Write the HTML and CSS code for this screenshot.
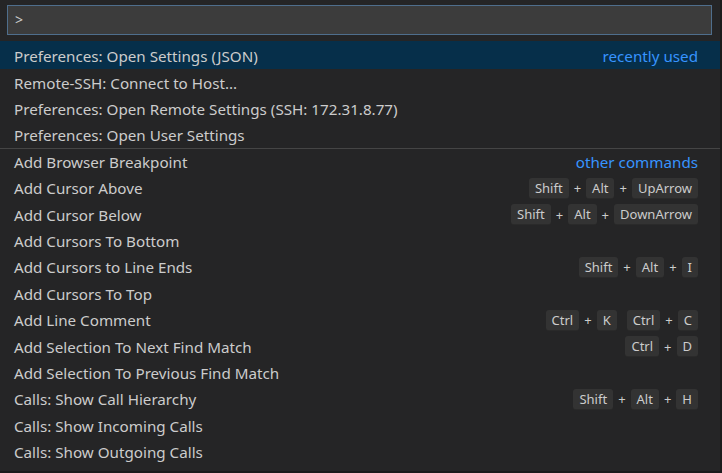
FILE: index.html
```html
<!DOCTYPE html>
<html>
	<head>
		<meta charset="utf-8" />
		<title>Command Palette</title>
		<link rel="stylesheet" href="styles.css">
	</head>
	<body>
		<div id="palette">
			<div class="input_wrap">
				<div class="input">&gt;</div>
			</div>
			<ul class="list">
				<li class="active"><span class="label">Preferences: Open Settings (JSON)</span><span class="group">recently used</span></li>
				<li><span class="label">Remote-SSH: Connect to Host...</span></li>
				<li><span class="label">Preferences: Open Remote Settings (SSH: 172.31.8.77)</span></li>
				<li><span class="label">Preferences: Open User Settings</span></li>
				<li class="sep"><span class="label">Add Browser Breakpoint</span><span class="group">other commands</span></li>
				<li><span class="label">Add Cursor Above</span>
					<span class="keys"><kbd>Shift</kbd><i>+</i><kbd>Alt</kbd><i>+</i><kbd>UpArrow</kbd></span></li>
				<li><span class="label">Add Cursor Below</span>
					<span class="keys"><kbd>Shift</kbd><i>+</i><kbd>Alt</kbd><i>+</i><kbd>DownArrow</kbd></span></li>
				<li><span class="label">Add Cursors To Bottom</span></li>
				<li><span class="label">Add Cursors to Line Ends</span>
					<span class="keys"><kbd>Shift</kbd><i>+</i><kbd>Alt</kbd><i>+</i><kbd>I</kbd></span></li>
				<li><span class="label">Add Cursors To Top</span></li>
				<li><span class="label">Add Line Comment</span>
					<span class="keys"><kbd>Ctrl</kbd><i>+</i><kbd>K</kbd><b></b><kbd>Ctrl</kbd><i>+</i><kbd>C</kbd></span></li>
				<li><span class="label">Add Selection To Next Find Match</span>
					<span class="keys"><kbd>Ctrl</kbd><i>+</i><kbd>D</kbd></span></li>
				<li><span class="label">Add Selection To Previous Find Match</span></li>
				<li><span class="label">Calls: Show Call Hierarchy</span>
					<span class="keys"><kbd>Shift</kbd><i>+</i><kbd>Alt</kbd><i>+</i><kbd>H</kbd></span></li>
				<li><span class="label">Calls: Show Incoming Calls</span></li>
				<li><span class="label">Calls: Show Outgoing Calls</span></li>
			</ul>
		</div>
	</body>
</html>
```

FILE: styles.css
```css
* {
	margin: 0;
	padding: 0;
	box-sizing: border-box;
}

body {
	background-color: #1b1b1c;
	font-family: "Noto Sans", sans-serif;
	font-size: 15.2px;
	color: #cccccc;
}

#palette {
	width: 720px;
	height: 471px;
	background-color: #252526;
}

.input_wrap {
	padding: 5px 8px 6px 7px;
}

.input {
	height: 30px;
	background-color: #3c3c3c;
	border: 1px solid #4f6e8c;
	padding-left: 7px;
	line-height: 27px;
	color: #cccccc;
	font-size: 14px;
}

.list {
	list-style: none;
	padding-top: 0;
}

.list li {
	height: 26.4px;
	display: flex;
	align-items: center;
	justify-content: space-between;
	padding: 1px 22px 0 14px;
}

.list li.active {
	background-color: #062f4a;
	height: 28px;
}

.list li.sep {
	border-top: 1px solid #454545;
}

.group {
	color: #3794ff;
}

.keys {
	display: flex;
	align-items: center;
	font-size: 13px;
}

.keys kbd {
	font-family: "Noto Sans", sans-serif;
	background-color: #333333;
	border-bottom: 1px solid #2a2a2a;
	border-radius: 3px;
	padding: 0 6px;
	height: 21px;
	line-height: 21px;
	color: #cccccc;
}

.keys i {
	font-style: normal;
	padding: 0 5px;
}

.keys b {
	width: 10px;
}
```
